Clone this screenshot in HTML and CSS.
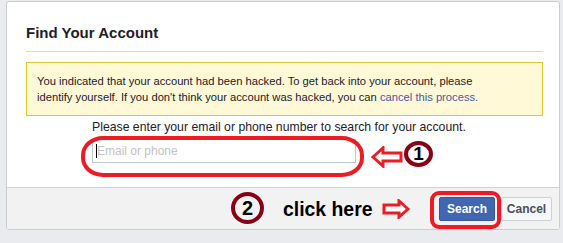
FILE: index.html
```html
<!DOCTYPE html>
<html>
<head>
<meta charset="utf-8">
<link rel="stylesheet" href="styles.css">
</head>
<body>
<div class="card">
  <div class="header"><h2 class="title">Find Your Account</h2></div>
  <div class="notice">You indicated that your account had been hacked. To get back into your account, please identify yourself. If you don't think your account was hacked, you can <a class="link" href="#">cancel this process.</a></div>
  <div class="form">
    <div class="prompt">Please enter your email or phone number to search for your account.</div>
    <div class="field"><input class="input" type="text" placeholder="Email or phone"><span class="caret"></span></div>
  </div>
  <div class="footer">
    <button class="btn btn-search">Search</button>
    <button class="btn btn-cancel">Cancel</button>
  </div>
</div>

<div class="annot oval-input"></div>
<svg class="annot arrow-left" width="32" height="22" viewBox="0 0 32 22"><polygon points="2,11 12,2 12,7 30,7 30,15 12,15 12,20" fill="#fff" stroke="#ed1c24" stroke-width="3" stroke-linejoin="miter"/></svg>
<div class="annot num num1">1</div>
<div class="annot num num2">2</div>
<div class="annot click">click here</div>
<svg class="annot arrow-right" width="28" height="20" viewBox="0 0 28 20"><polygon points="26,10 17,2 17,6 2,6 2,14 17,14 17,18" fill="#fff" stroke="#ed1c24" stroke-width="3" stroke-linejoin="miter"/></svg>
<div class="annot box-search"></div>
</body>
</html>
```

FILE: styles.css
```css
html, body {
  margin: 0;
  padding: 0;
}
body {
  background: #e9ebee;
  font-family: "Liberation Sans", Arial, sans-serif;
  padding: 1px 0 0 6px;
  height: 243px;
  box-sizing: border-box;
  overflow: hidden;
}
.card {
  width: 554px;
  box-sizing: border-box;
  background: #fff;
  border: 1px solid #cacdd1;
  border-radius: 3px;
  overflow: hidden;
}
.header {
  margin: 0 16px 0 19px;
  padding: 21px 0 8px;
  border-bottom: 1px solid #d3d6db;
}
.title {
  margin: 0;
  font-size: 15px;
  line-height: 20px;
  font-weight: bold;
  color: #1d2129;
}
.notice {
  margin: 10px 16px 0 19px;
  padding: 10px 50px 10px 10px;
  background: #fff9d7;
  border: 1px solid #e2c822;
  font-size: 11.2px;
  line-height: 16px;
  color: #1d2129;
}
.link {
  color: #4b5aa1;
  text-decoration: none;
}
.form {
  padding: 3px 0 24px 85px;
}
.prompt {
  font-size: 12.25px;
  line-height: 16px;
  color: #1d2129;
}
.field {
  position: relative;
  margin-top: 4px;
  width: 264px;
}
.input {
  display: block;
  width: 264px;
  height: 24px;
  box-sizing: border-box;
  margin: 0;
  border: 1px solid #bdc7d8;
  padding: 0 4px;
  font-family: "Liberation Sans", Arial, sans-serif;
  font-size: 12px;
  color: #1d2129;
  outline: none;
}
.input::placeholder {
  color: #c4c4c4;
}
.caret {
  position: absolute;
  left: 4px;
  top: 5px;
  width: 1px;
  height: 14px;
  background: #000;
}
.footer {
  border-top: 1px solid #cfd2d6;
  background: #f2f2f2;
  padding: 9px 7px 8px 0;
  display: flex;
  justify-content: flex-end;
  gap: 6px;
}
.btn {
  height: 24px;
  box-sizing: border-box;
  padding: 0;
  border-radius: 2px;
  font-family: "Liberation Sans", Arial, sans-serif;
  font-size: 12px;
  font-weight: bold;
  line-height: 22px;
  text-align: center;
}
.btn-search {
  width: 56px;
  background: #4267b2;
  border: 1px solid #365899;
  color: #fff;
}
.btn-cancel {
  width: 51px;
  background: #f6f7f9;
  border: 1px solid #ced0d4;
  color: #4b4f56;
}
.annot {
  position: absolute;
  box-sizing: border-box;
}
.oval-input {
  left: 81px;
  top: 136px;
  width: 283px;
  height: 41px;
  border: 4px solid #ed1c24;
  border-radius: 22px / 19px;
}
.arrow-left {
  left: 371px;
  top: 146px;
}
.arrow-right {
  left: 382px;
  top: 199px;
}
.num {
  border: 4px solid #880015;
  border-radius: 50%;
  color: #000;
  font-weight: bold;
  text-align: center;
}
.num1 {
  left: 404px;
  top: 141px;
  width: 29px;
  height: 26px;
  font-size: 19px;
  line-height: 18px;
}
.num2 {
  left: 231px;
  top: 192px;
  width: 33px;
  height: 32px;
  font-size: 20px;
  line-height: 24px;
}
.click {
  left: 283px;
  top: 198px;
  font-size: 19.4px;
  line-height: 22px;
  font-weight: bold;
  color: #000;
  white-space: nowrap;
}
.box-search {
  left: 430px;
  top: 191px;
  width: 71px;
  height: 38px;
  border: 4px solid #ed1c24;
  border-radius: 9px;
}
```
